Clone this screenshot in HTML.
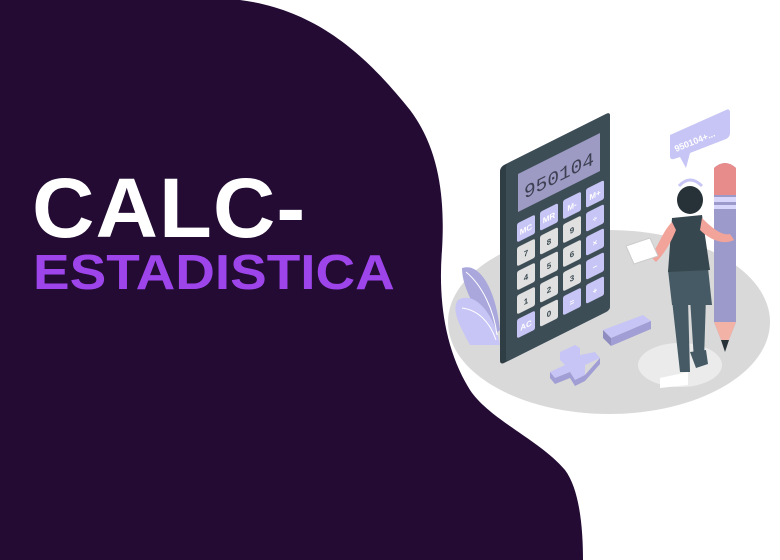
<!DOCTYPE html>
<html><head><meta charset="utf-8"><style>
html,body{margin:0;padding:0;width:780px;height:560px;overflow:hidden;background:#fff}
svg{position:absolute;left:0;top:0}
.t{position:absolute;font-family:"Liberation Sans",sans-serif;font-weight:bold;white-space:nowrap;transform-origin:0 0}
</style></head><body>
<svg width="780" height="560" viewBox="0 0 780 560">
<path d="M0,0 L240,0 C320,10 370,60 410,110 C440,150 445,200 442,250 C438,300 445,350 470,390 C490,420 540,440 565,470 C580,490 583,530 583,560 L0,560 Z" fill="#230b34"/>
<ellipse cx="609" cy="322" rx="161" ry="92" fill="#d9d9d9"/>
<ellipse cx="680" cy="365" rx="42" ry="22" fill="#ebebeb"/>
<path d="M462,268 C480,262 496,290 500,330 L490,338 C478,310 462,290 462,268Z" fill="#a9a7dc"/>
<path d="M458,300 C475,290 495,315 500,345 L470,345 C462,330 450,310 458,300Z" fill="#c7c5f5"/>
<path d="M466,272 C482,285 494,310 497,335 M462,308 C478,310 490,322 496,340" stroke="#fff" fill="none" stroke-width="1"/>
<g transform="translate(500,167) matrix(1,-0.5,0,1,0,0)">
<rect x="0" y="0" width="110" height="198" rx="4" fill="#2f3d44"/>
<rect x="6" y="0" width="104" height="198" rx="3" fill="#3d4d55"/>
<rect x="18" y="16" width="82" height="38" fill="#9d9bc4"/>
<text x="24" y="44" font-family="Liberation Mono" font-size="19" fill="#3d4052" textLength="70" lengthAdjust="spacingAndGlyphs">950104</text>
</g>
<g transform="translate(500,167) matrix(1,-0.5,0,1,0,0)" font-family="Liberation Sans" font-weight="bold" font-size="8" text-anchor="middle">
<g fill="#c7c5f5">
<rect x="17" y="65" width="18" height="19" rx="2"/><rect x="40" y="65" width="18" height="19" rx="2"/><rect x="63" y="65" width="18" height="19" rx="2"/><rect x="86" y="65" width="18" height="19" rx="2"/>
<rect x="86" y="89" width="18" height="19" rx="2"/><rect x="86" y="113" width="18" height="19" rx="2"/><rect x="86" y="137" width="18" height="19" rx="2"/><rect x="86" y="161" width="18" height="19" rx="2"/>
<rect x="63" y="161" width="18" height="19" rx="2"/><rect x="17" y="161" width="18" height="19" rx="2"/>
</g>
<g fill="#e0e0e0">
<rect x="17" y="89" width="18" height="19" rx="2"/><rect x="40" y="89" width="18" height="19" rx="2"/><rect x="63" y="89" width="18" height="19" rx="2"/>
<rect x="17" y="113" width="18" height="19" rx="2"/><rect x="40" y="113" width="18" height="19" rx="2"/><rect x="63" y="113" width="18" height="19" rx="2"/>
<rect x="17" y="137" width="18" height="19" rx="2"/><rect x="40" y="137" width="18" height="19" rx="2"/><rect x="63" y="137" width="18" height="19" rx="2"/>
<rect x="40" y="161" width="18" height="19" rx="2"/>
</g>
<g fill="#fff"><text x="26" y="78">MC</text><text x="49" y="78">MR</text><text x="72" y="78">M-</text><text x="95" y="78">M+</text>
<text x="95" y="102">÷</text><text x="95" y="126">×</text><text x="95" y="150">−</text><text x="95" y="174">+</text><text x="72" y="174">=</text><text x="26" y="174">AC</text></g>
<g fill="#37474f"><text x="26" y="102">7</text><text x="49" y="102">8</text><text x="72" y="102">9</text>
<text x="26" y="126">4</text><text x="49" y="126">5</text><text x="72" y="126">6</text>
<text x="26" y="150">1</text><text x="49" y="150">2</text><text x="72" y="150">3</text><text x="49" y="174">0</text></g>
</g>
<path d="M560,352 L575,345 L580,348 L580,355 L595,352 L600,358 L585,365 L585,375 L575,380 L570,372 L555,378 L550,372 L565,365 L560,360Z" fill="#c7c5f5"/>
<path d="M550,372 L555,378 L570,372 L575,380 L585,375 L600,358 L600,364 L585,381 L575,386 L570,378 L555,384 L550,378Z" fill="#a09ed4"/>
<path d="M603,330 L643,315 L651,321 L611,338Z" fill="#c7c5f5"/>
<path d="M603,330 L611,338 L611,346 L603,338Z" fill="#8f8dc0"/><path d="M611,338 L651,321 L651,329 L611,346Z" fill="#a09ed4"/>
<path d="M670,135 L726,110 Q730,108 730,113 L730,133 Q730,137 726,139 L690,153 L686,168 L680,157 L674,159 Q670,160 670,156Z" fill="#c7c5f5"/>
<text x="676" y="152" font-family="Liberation Sans" font-weight="bold" font-size="9" fill="#fff" transform="rotate(-22 676 152)">950104+...</text>
<path d="M714,168 Q725,158 736,168 L736,322 L725,350 L714,322Z" fill="#9c9acb"/>
<path d="M714,168 Q725,158 736,168 L736,195 L714,195Z" fill="#e88b8b"/>
<rect x="714" y="197" width="22" height="5" fill="#d8d6fb"/><rect x="714" y="205" width="22" height="4" fill="#d8d6fb"/>
<path d="M714,322 L736,322 L725,350Z" fill="#f2b3a6"/><path d="M721,340 L729,340 L725,352Z" fill="#263238"/>
<path d="M672,300 L688,300 L690,372 L680,372Z M690,298 L706,296 L704,360 L694,360Z" fill="#455a64"/>
<path d="M668,270 L708,268 L712,305 L672,305Z" fill="#455a64"/>
<path d="M672,218 L702,215 L710,270 L668,272Z" fill="#37474f"/>
<path d="M672,222 C662,232 658,248 650,256 L656,262 C666,252 672,240 676,230Z" fill="#f2a39a"/>
<path d="M702,218 C712,228 722,236 730,234 L734,240 C722,246 708,238 700,230Z" fill="#f2a39a"/>
<ellipse cx="690" cy="200" rx="13" ry="14" fill="#263238"/>
<path d="M679,186 Q690,174 702,186" stroke="#c7c5f5" stroke-width="3" fill="none"/>
<path d="M626,246 L650,238 L658,256 L634,264Z" fill="#fff" stroke="#ccc"/>
<path d="M660,378 L688,372 L688,385 L660,388Z" fill="#fff"/><path d="M690,352 L706,350 L708,364 L696,368Z" fill="#455a64"/>
</svg>
<div class="t" style="left:32px;top:160px;font-size:84px;color:#fff;transform:scale(1.03,1);letter-spacing:1px">CALC-</div>
<div class="t" style="left:33px;top:245px;font-size:49px;color:#9d45eb;transform:scale(1.12,1)">ESTADISTICA</div>
</body></html>
